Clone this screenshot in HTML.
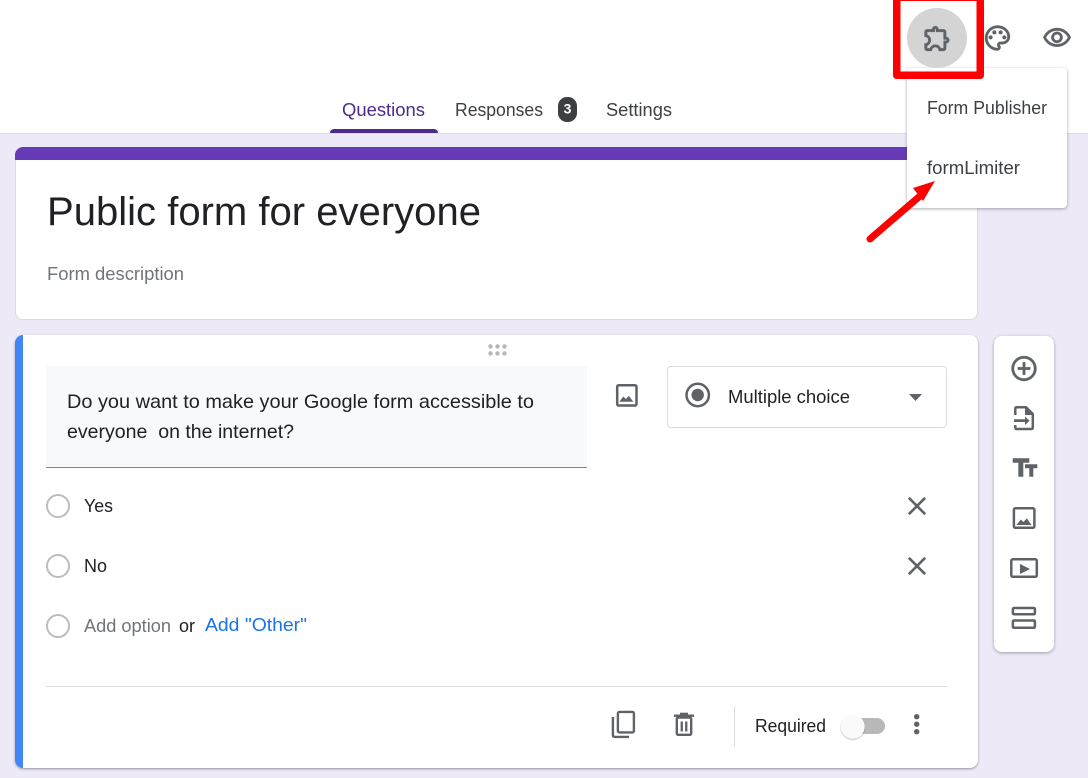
<!DOCTYPE html>
<html>
<head>
<meta charset="utf-8">
<title>Public form for everyone</title>
<style>
html,body{margin:0;padding:0;width:1088px;height:778px;overflow:hidden;background:#ede9f7;}
.b{position:absolute;box-sizing:border-box;}
svg{position:absolute;left:0;top:0;}
text{font-family:"Liberation Sans",sans-serif;}
</style>
</head>
<body>
<div class="b" style="left:0;top:0;width:1088px;height:134px;background:#fff;border-bottom:1px solid #dadce0;"></div>
<div class="b" style="left:15px;top:147px;width:963px;height:173px;background:#fff;border:1px solid #dadce0;border-radius:8px;"></div>
<div class="b" style="left:15px;top:147px;width:963px;height:13px;background:#673ab7;border-radius:8px 8px 0 0;"></div>
<div class="b" style="left:15px;top:335px;width:963px;height:433px;background:#fff;border-radius:8px;box-shadow:0 1px 2px rgba(60,64,67,.5);"></div>
<div class="b" style="left:15px;top:335px;width:8px;height:433px;background:#4285f4;border-radius:8px 0 0 8px;"></div>
<div class="b" style="left:46px;top:366px;width:541px;height:102px;background:#f8f9fa;border-bottom:1px solid #80868b;"></div>
<div class="b" style="left:667px;top:366px;width:280px;height:62px;background:#fff;border:1px solid #dadce0;border-radius:4px;"></div>
<div class="b" style="left:46px;top:686px;width:901px;height:1px;background:#dadce0;"></div>
<div class="b" style="left:734px;top:707px;width:1px;height:40px;background:#dadce0;"></div>
<div class="b" style="left:994px;top:336px;width:60px;height:316px;background:#fff;border-radius:8px;box-shadow:0 1px 3px rgba(60,64,67,.45);"></div>
<div class="b" style="left:907px;top:68px;width:160px;height:140px;background:#fff;border-radius:4px;box-shadow:0 1px 3px rgba(60,64,67,.45);"></div>
<div class="b" style="left:330px;top:129px;width:108px;height:4px;background:#4d2a8c;border-radius:4px 4px 0 0;"></div>
<div class="b" style="left:558px;top:97px;width:19px;height:25px;background:#3c4043;border-radius:9px;"></div>

<svg width="1088" height="778" viewBox="0 0 1088 778" xmlns="http://www.w3.org/2000/svg">
  <!-- Tabs -->
  <text x="342" y="116" font-size="18" fill="#4d2a8c" textLength="83" lengthAdjust="spacingAndGlyphs">Questions</text>
  <text x="455" y="116" font-size="18" fill="#3c4043" textLength="88" lengthAdjust="spacingAndGlyphs">Responses</text>
  <text x="567.5" y="113.500" font-size="14" font-weight="700" fill="#fff" text-anchor="middle">3</text>
  <text x="606" y="116" font-size="18" fill="#3c4043" textLength="66" lengthAdjust="spacingAndGlyphs">Settings</text>

  <!-- Top icons -->
  <circle cx="937" cy="38" r="30" fill="#d4d4d4"/>
  <g fill="#5f6368" stroke="#5f6368" stroke-width=".3">
    <path transform="translate(922,23) scale(1.27)" d="M10.5 4.5c.28 0 .5.22.5.5v2h6v6h2c.28 0 .5.22.5.5s-.22.5-.5.5h-2v6h-2.12c-.68-1.75-2.39-3-4.38-3s-3.7 1.25-4.38 3H4v-2.12c1.75-.68 3-2.39 3-4.38 0-1.99-1.24-3.7-2.99-4.38L4 7h6V5c0-.28.22-.5.5-.5m0-2C9.12 2.5 8 3.62 8 5H4c-1.1 0-1.99.9-1.99 2v3.8h.29c1.49 0 2.7 1.21 2.7 2.7s-1.21 2.7-2.7 2.7H2V20c0 1.1.9 2 2 2h3.8v-.3c0-1.49 1.21-2.7 2.7-2.7s2.7 1.21 2.7 2.7v.3H17c1.1 0 2-.9 2-2v-4c1.38 0 2.5-1.12 2.5-2.5S20.38 11 19 11V7c0-1.1-.9-2-2-2h-4c0-1.38-1.12-2.5-2.5-2.5z"/>
    <g transform="translate(982.5,23) scale(1.25)">
      <path d="M12 22C6.49 22 2 17.51 2 12S6.49 2 12 2s10 4.04 10 9c0 3.31-2.69 6-6 6h-1.77c-.28 0-.5.22-.5.5 0 .12.05.23.13.33.41.47.64 1.06.64 1.67A2.5 2.5 0 0 1 12 22zm0-18c-4.41 0-8 3.59-8 8s3.59 8 8 8c.28 0 .5-.22.5-.5a.54.54 0 0 0-.14-.35c-.41-.46-.63-1.05-.63-1.65a2.5 2.5 0 0 1 2.5-2.5H16c2.21 0 4-1.79 4-4 0-3.86-3.59-7-8-7z"/>
      <circle cx="6.5" cy="11.5" r="1.5"/><circle cx="9.5" cy="7.5" r="1.5"/><circle cx="14.5" cy="7.5" r="1.5"/><circle cx="17.5" cy="11.5" r="1.5"/>
    </g>
    <path transform="translate(1042,23) scale(1.25)" d="M12 6a9.77 9.77 0 0 1 8.82 5.5C19.17 14.87 15.79 17 12 17s-7.17-2.13-8.82-5.5A9.77 9.77 0 0 1 12 6m0-2C7 4 2.73 7.11 1 11.5 2.73 15.89 7 19 12 19s9.27-3.11 11-7.5C21.27 7.11 17 4 12 4zm0 5a2.5 2.5 0 0 1 0 5 2.5 2.5 0 0 1 0-5m0-2c-2.48 0-4.5 2.02-4.5 4.5S9.52 16 12 16s4.5-2.02 4.5-4.5S14.48 7 12 7z"/>
  </g>

  <!-- Red box -->
  <path d="M893 0H984V75Q984 79 980 79H897Q893 79 893 75ZM900.5 1V71.5H976.500V1Z" fill="#fe0000" fill-rule="evenodd"/>

  <!-- Menu -->
  <text x="927" y="114" font-size="18" fill="#3c4043" textLength="120" lengthAdjust="spacingAndGlyphs">Form Publisher</text>
  <text x="927" y="174" font-size="18" fill="#3c4043" textLength="93" lengthAdjust="spacingAndGlyphs">formLimiter</text>

  <!-- Arrow -->
  <path d="M870 239L920 196" stroke="#fe0000" stroke-width="7" stroke-linecap="round" fill="none"/>
  <path d="M935 181L913 188L923 201Z" fill="#fe0000"/>

  <!-- Title card -->
  <text x="47" y="225" font-size="40" fill="#202124" textLength="434" lengthAdjust="spacingAndGlyphs">Public form for everyone</text>
  <text x="47" y="280" font-size="18" fill="#70757a" textLength="137" lengthAdjust="spacingAndGlyphs">Form description</text>

  <!-- Drag handle -->
  <g fill="#b4b7bb">
    <circle cx="490.5" cy="346.5" r="2.2"/><circle cx="497.5" cy="346.5" r="2.2"/><circle cx="504.5" cy="346.5" r="2.2"/>
    <circle cx="490.5" cy="353.5" r="2.2"/><circle cx="497.5" cy="353.5" r="2.2"/><circle cx="504.5" cy="353.5" r="2.2"/>
  </g>

  <!-- Question -->
  <text x="67" y="408" font-size="19.5" fill="#202124" textLength="467" lengthAdjust="spacingAndGlyphs">Do you want to make your Google form accessible to</text>
  <text x="67" y="438" font-size="19.5" fill="#202124" textLength="227" lengthAdjust="spacingAndGlyphs" xml:space="preserve">everyone  on the internet?</text>

  <!-- Image icon -->
  <rect x="617.2" y="385.2" width="19.300" height="20.300" rx="1.500" fill="none" stroke="#5f6368" stroke-width="2.500"/>
  <path d="M619.300 401.700L623.300 396.500L626 399L628.800 395.700L633.300 401.700Z" fill="#5f6368"/>

  <!-- Dropdown -->
  <circle cx="697.7" cy="395" r="11.2" fill="none" stroke="#5f6368" stroke-width="2.500"/>
  <circle cx="697.7" cy="395" r="6.200" fill="#5f6368"/>
  <text x="728" y="403" font-size="18" fill="#202124" textLength="122" lengthAdjust="spacingAndGlyphs">Multiple choice</text>
  <path d="M909 394H922L915.500 401Z" fill="#5f6368"/>

  <!-- Options -->
  <g fill="none" stroke="#bdbdbd" stroke-width="2">
    <circle cx="58" cy="506" r="11"/>
    <circle cx="58" cy="566" r="11"/>
    <circle cx="58" cy="626" r="11"/>
  </g>
  <text x="84" y="512" font-size="18" fill="#202124" textLength="29" lengthAdjust="spacingAndGlyphs">Yes</text>
  <text x="84" y="572" font-size="18" fill="#202124" textLength="23" lengthAdjust="spacingAndGlyphs">No</text>
  <text x="84" y="632" font-size="18" fill="#70757a" textLength="87" lengthAdjust="spacingAndGlyphs">Add option</text>
  <text x="179" y="632" font-size="18" fill="#202124" textLength="16" lengthAdjust="spacingAndGlyphs">or</text>
  <text x="205" y="631" font-size="18" fill="#1a73e8" textLength="102" lengthAdjust="spacingAndGlyphs">Add "Other"</text>
  <g fill="#5f6368">
    <path transform="translate(901.4,490.4) scale(1.3)" d="M19 6.41L17.59 5 12 10.59 6.41 5 5 6.41 10.59 12 5 17.59 6.41 19 12 13.41 17.59 19 19 17.59 13.41 12z"/>
    <path transform="translate(901.4,550.4) scale(1.3)" d="M19 6.41L17.59 5 12 10.59 6.41 5 5 6.41 10.59 12 5 17.59 6.41 19 12 13.41 17.59 19 19 17.59 13.41 12z"/>
  </g>

  <!-- Footer -->
  <g fill="none" stroke="#5f6368" stroke-width="2.400">
    <rect x="617.900" y="711.900" width="16" height="20.500" rx="1.500"/>
    <path d="M612.900 717V735Q612.900 736.900 614.900 736.900H629"/>
    <rect x="676.800" y="717.500" width="14.400" height="17.300" rx="1.500"/>
  </g>
  <g fill="#5f6368">
    <rect x="674" y="714.500" width="20" height="2.400"/>
    <rect x="680" y="712.700" width="8" height="2.500"/>
    <rect x="680.600" y="721.500" width="2.300" height="10"/>
    <rect x="685.100" y="721.500" width="2.300" height="10"/>
    <circle cx="916.7" cy="716.7" r="2.700"/><circle cx="916.7" cy="724.200" r="2.700"/><circle cx="916.7" cy="731.700" r="2.700"/>
  </g>
  <text x="755" y="732" font-size="18" fill="#202124" textLength="71" lengthAdjust="spacingAndGlyphs">Required</text>
  <rect x="845" y="718" width="40" height="16" rx="8" fill="#b9b9b9"/>
  <circle cx="852.7" cy="727.700" r="12.500" fill="#000" opacity=".14"/>
  <circle cx="852.7" cy="726.700" r="12" fill="#fafafa"/>

  <!-- Side toolbar -->
  <g fill="#5f6368" stroke="#5f6368" stroke-width=".25">
    <path transform="translate(1009,353.5) scale(1.25)" d="M13 7h-2v4H7v2h4v4h2v-4h4v-2h-4V7zm-1-5C6.48 2 2 6.48 2 12s4.48 10 10 10 10-4.48 10-10S17.52 2 12 2zm0 18c-4.41 0-8-3.59-8-8s3.59-8 8-8 8 3.59 8 8-3.59 8-8 8z"/>
  </g>
  <g fill="#5f6368">
    <!-- import file -->
    <path d="M1025 406.500L1034 415H1025Z"/>
    <path d="M1014 419.300H1025V416.500L1029.500 420.700L1025 425V422H1014Z"/>
    <!-- Tt -->
    <path d="M1012.700 458.300H1029.300V462.800H1023.300V476.700H1018.300V462.800H1012.700Z"/>
    <path d="M1025 464.300H1037.300V468.300H1033.300V476.700H1029.300V468.300H1025Z"/>
    <!-- image mountains -->
    <path d="M1016.500 525L1020.800 519.500L1023.500 522L1026.800 518.300L1031.500 525Z"/>
    <!-- video triangle -->
    <path d="M1020 564L1030 569L1020 574Z"/>
  </g>
  <g fill="none" stroke="#5f6368" stroke-width="2.500">
    <path d="M1015.300 415V408.700Q1015.300 407.300 1017 407.300H1026L1032.800 414V427.500Q1032.800 429 1031.300 429H1017Q1015.300 429 1015.300 427.500V425"/>
    <rect x="1013.900" y="508.300" width="20.500" height="19.500" rx="1.500"/>
    <rect x="1011.300" y="559.300" width="25.500" height="17.500" rx="1.500"/>
    <rect x="1012.900" y="608" width="22" height="6.200" rx="1"/>
    <rect x="1012.900" y="620.500" width="22" height="7.300" rx="1"/>
  </g>
</svg>
</body>
</html>
